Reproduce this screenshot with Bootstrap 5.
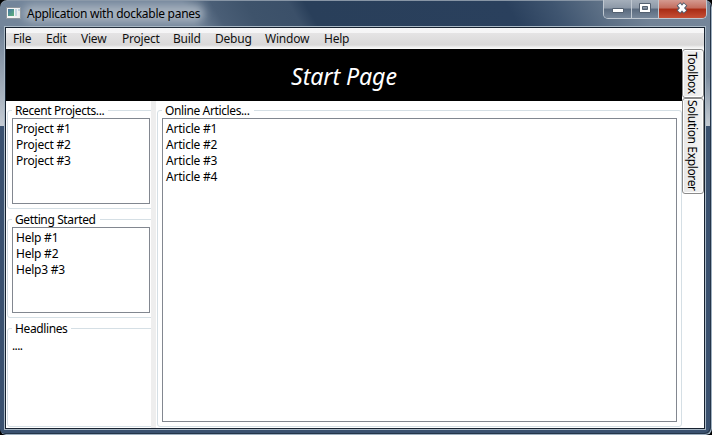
<!DOCTYPE html>
<html lang="en"><head><meta charset="utf-8"><title>Application with dockable panes</title>
<link href="https://cdn.jsdelivr.net/npm/bootstrap@5.3.0/dist/css/bootstrap.min.css" rel="stylesheet">
<style>
body{width:712px;height:435px;background:#000;font:12px/16px "Noto Sans","Open Sans",sans-serif;letter-spacing:-.23px;color:#000;overflow:hidden}
.win{width:712px;height:435px;padding:0 6px 5px 4px;border-radius:7px 7px 6px 6px;
background:
linear-gradient(#6f8196,#a9b3bf 70%,#c5ccd4) 0 27px/5px 99px no-repeat,
linear-gradient(#75879b,#7d8da0 50%,#c5ccd4) 706px 27px/6px 99px no-repeat,
linear-gradient(60deg,#73859a 0,#73859a 170px,#4a5e76 195px,#3e536b 225px,#3b5069 262px,#293f5a 276px,#2a405d 450px,#3f5570 490px,#5d7086 530px,#718296 565px,#75869a) 0 0/712px 27px no-repeat,
#3a516f;box-shadow:inset 0 1px #8795a5, inset -1px -1px #9fb1c1, inset -2px -2px #25364a}
.titlebar{height:26px;padding-left:2px}
.caption-text{font-size:12px;margin-left:6px;letter-spacing:-.27px;position:relative;z-index:0}
.caption-text::before{content:"";position:absolute;z-index:-1;left:-4px;right:-4px;top:5px;height:17px;border-radius:9px;background:#a5b1be;filter:blur(4px)}
.ctl{height:19px;border:1px solid #c0c8d1;border-top:0;border-radius:0 0 5px 5px;overflow:hidden;margin-right:-1px}
.ctl div{background:linear-gradient(#a5afbb,#8c98a7 45%,#5a6a7e 50%,#77879a);border-right:1px solid #c0c8d1}
.ctl .shut{background:linear-gradient(#d49a90,#c36c5d 45%,#a82b14 50%,#c64f35);border:0}
.client{border:1px solid #a9b8c5;height:404px}
.inner{border:1px solid #172230;background:#fff;height:402px}
.menu{height:21px;background:linear-gradient(#f7f7f8 0,#f5f5f6 5px,#e5e4e5 5px,#d9d8d8 17px,#eee 19px,#fafafa);padding-left:7px;color:#111}
.menu span{padding-top:3px}
.hero{height:52px;background:#000;color:#fff;font:italic 23.2px/54px "Noto Sans","Open Sans",sans-serif;letter-spacing:-.1px}
.side{width:145px;padding:2px 0 0 1px;overflow:hidden}
.split{width:5px;background:#eee}
.gb{border:1px solid #d5dfe5;border-radius:3px;position:relative;padding:7px 4px 4px;margin-top:7px}
.side .gb{width:150px}
.gb h2{position:absolute;left:4px;top:-8px;font:inherit;letter-spacing:-.38px;margin:0;background:#fff;padding:0 4px 0 3px;white-space:nowrap;line-height:15px}
.lb{border:1px solid #828790;padding:2px 3px}
.side .lb{width:138px;height:86px}
.dock{width:22px}
.dock div{writing-mode:vertical-rl;white-space:nowrap;border:1px solid #8b8b8b;border-radius:3px;background:linear-gradient(270deg,#f4f4f4,#e8e8e8);box-shadow:inset 0 0 0 1px #fff;width:22px;line-height:18px;padding-right:2px;letter-spacing:-.36px}
</style></head><body>
<div class="win">
<div class="titlebar d-flex">
<svg width="15" height="13" class="flex-shrink-0" style="margin-top:7px" viewBox="0 0 15 13"><defs><linearGradient id="g" x2="1" y2="1"><stop stop-color="#4774a6"/><stop offset="1" stop-color="#5db278"/></linearGradient></defs><path fill="#f4f4f4" stroke="#8d959d" d="M.5.5h14v11H.5z"/><path fill="url(#g)" d="M2 2h6v7H2z"/><path fill="#c4d6e2" d="M9 2h2v7H9zM12 2h2v2h-2z"/></svg>
<div class="caption-text lh-1 pt-2">Application with dockable panes</div>
<div class="ctl d-flex ms-auto"><div style="width:28px"><svg width="28" height="18" class="d-block"><path fill="#fff" stroke="#536070" d="M8.500 8.500h11v4h-11z"/></svg></div><div style="width:27px"><svg width="27" height="18" class="d-block"><path fill="#fff" fill-rule="evenodd" stroke="#536070" d="M7.500 3.500h11v9h-11zM10.500 6.500h5v3h-5z"/></svg></div><div class="shut" style="width:47px"><svg width="47" height="18" class="d-block"><path d="M19.500 4l7 8M26.500 4l-7 8" stroke="#536070" stroke-width="5"/><path d="M20 4.500l6 7M26 4.500l-6 7" stroke="#fff" stroke-width="3"/></svg></div></div>
</div>
<div class="client"><div class="inner">
<div class="menu d-flex"><span style="width:33px">File</span><span style="width:35px">Edit</span><span style="width:41px">View</span><span style="width:51px">Project</span><span style="width:42px">Build</span><span style="width:50px">Debug</span><span style="width:59px">Window</span><span>Help</span></div>
<div class="d-flex"><div class="flex-grow-1"><div class="hero text-center">Start Page</div>
<div class="d-flex" style="height:327px">
<div class="side flex-shrink-0">
<div class="gb" style="height:99px"><h2>Recent Projects...</h2><div class="lb">Project #1<br>Project #2<br>Project #3</div></div>
<div class="gb" style="height:99px;margin-top:10px"><h2>Getting Started</h2><div class="lb">Help #1<br>Help #2<br>Help3 #3</div></div>
<div class="gb" style="height:99px;margin-top:10px"><h2>Headlines</h2><div class="pt-1" style="line-height:12px;letter-spacing:-.6px">....</div></div>
</div><div class="split"></div>
<div class="flex-grow-1" style="padding:2px 0 0 1px"><div class="gb" style="height:317px"><h2>Online Articles...</h2><div class="lb h-100">Article #1<br>Article #2<br>Article #3<br>Article #4</div></div></div>
</div></div>
<div class="dock"><div style="height:49px;padding-top:2px">Toolbox</div><div style="height:96px;padding-top:1px">Solution Explorer</div></div>
</div></div></div></div>
<script src="https://cdn.jsdelivr.net/npm/bootstrap@5.3.0/dist/js/bootstrap.bundle.min.js"></script>
</body></html>
